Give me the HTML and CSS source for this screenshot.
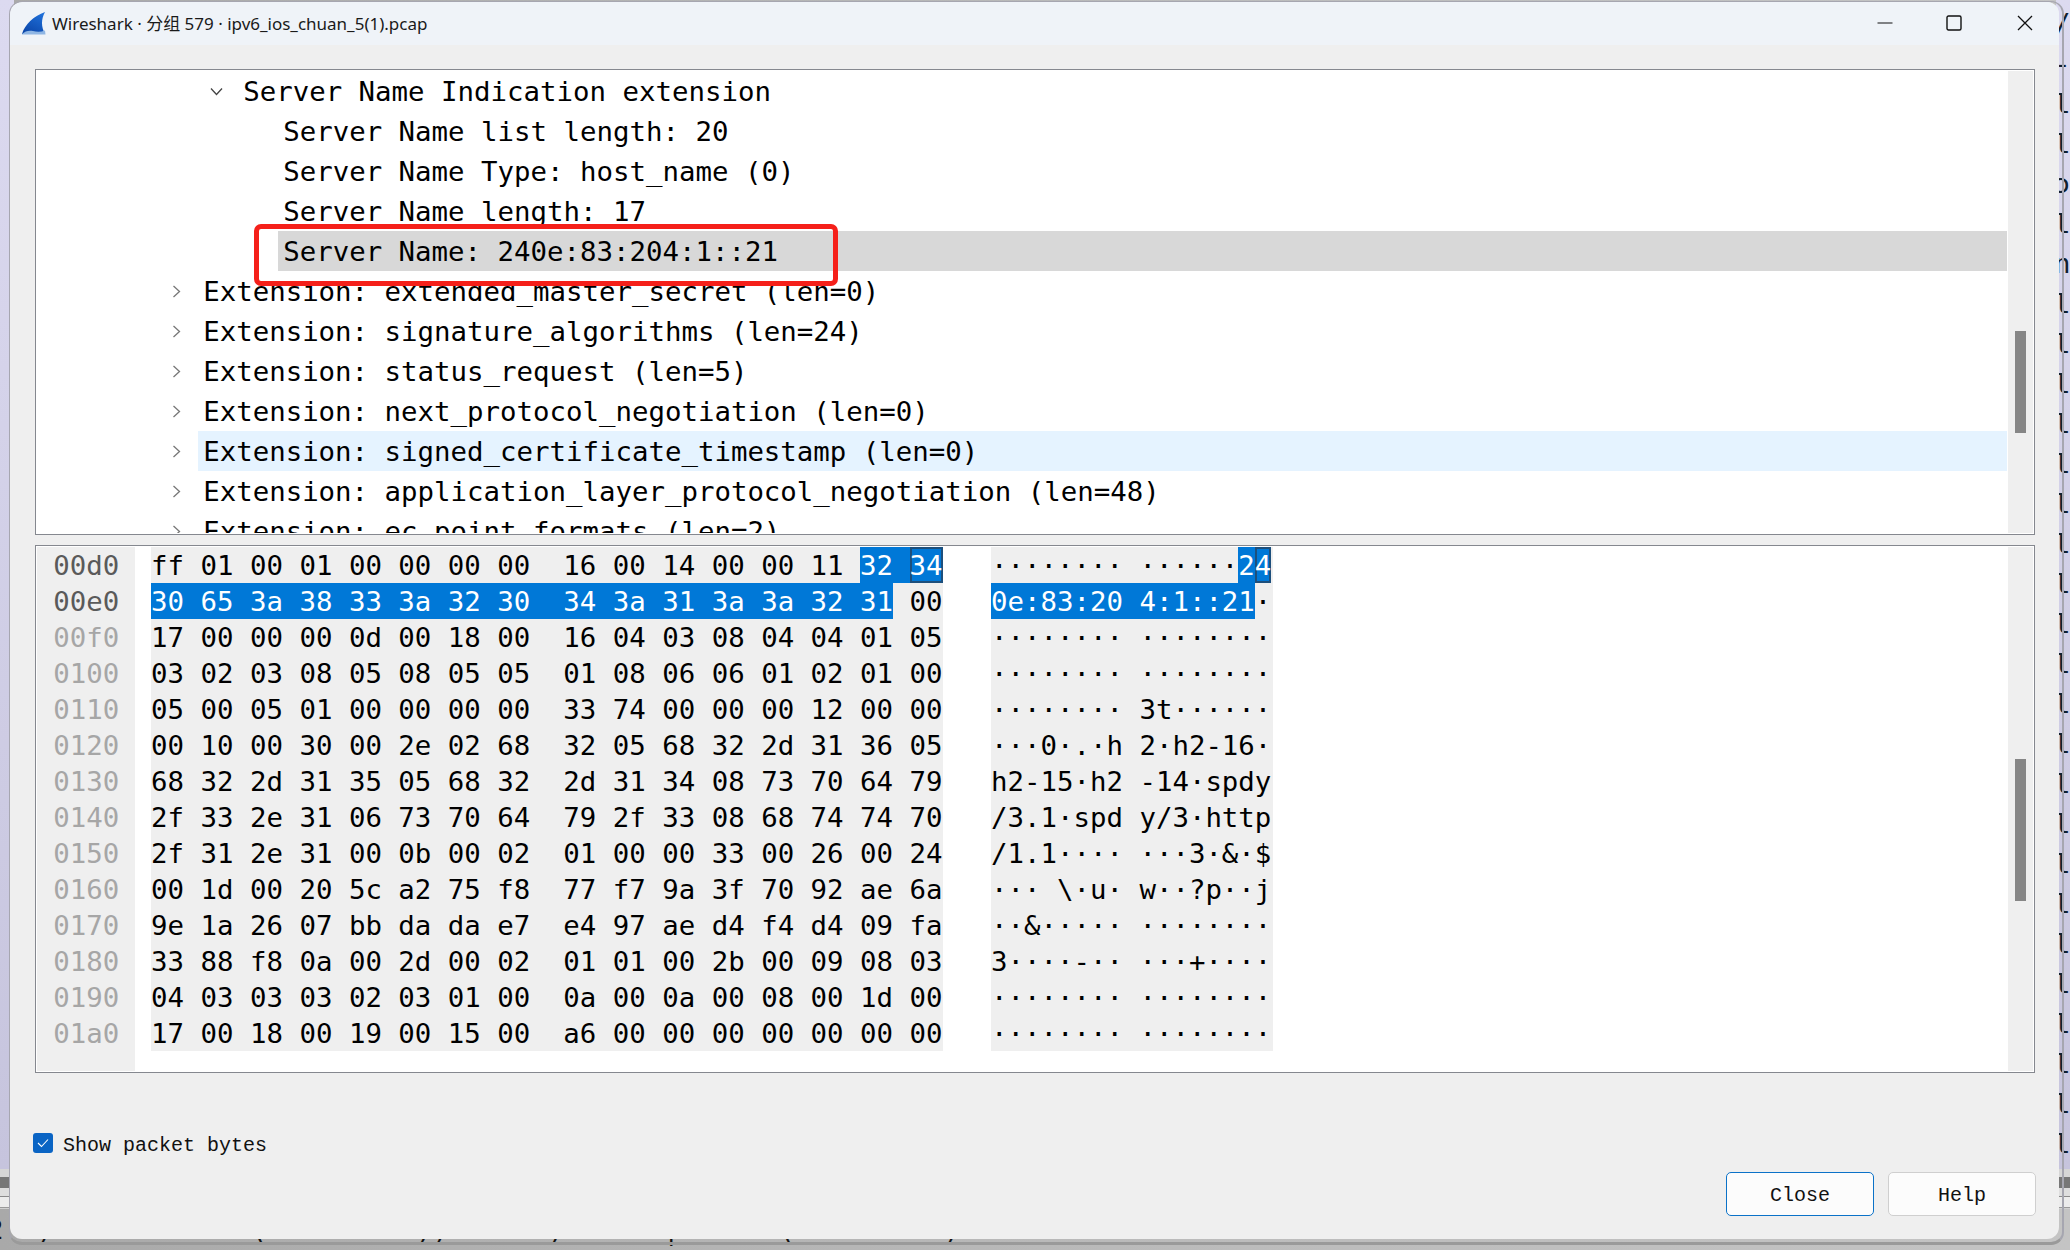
FILE: index.html
```html
<!DOCTYPE html>
<html lang="en">
<head>
<meta charset="utf-8">
<title>Wireshark · 分组 579 · ipv6_ios_chuan_5(1).pcap</title>
<link rel="stylesheet" href="styles.css">
</head>
<body>
<div class="desktop">
  <div class="strip strip-left"></div>
  <div class="strip strip-right"></div>
  <pre class="desk-lines">/
-
l
l
ɔ
l
n
l
l
l
l
l
l
l
l
l
l
l
l
l
l
l
l
l
l
l
l
l
l</pre>
  <div class="taskband taskband-left"></div>
  <div class="taskband taskband-right"></div>
  <pre class="desk-bottom">2  )            (         ))      )      |      (         )</pre>

  <main class="window">
    <header class="titlebar">
      <svg class="shark" width="24" height="24" viewBox="0 0 24 24" aria-hidden="true">
        <defs>
          <linearGradient id="fin" x1="0.7" y1="0" x2="0.2" y2="1">
            <stop offset="0" stop-color="#1f6fd8"/>
            <stop offset="1" stop-color="#0b45a8"/>
          </linearGradient>
        </defs>
        <path d="M0 23 C3 13 12 5 23 1 C19 8 19 16 23 23 Z" fill="url(#fin)"/>
        <path d="M0 23 C3 20 7 19 11 20 C15 21 19 21 23 19.5 L23.500 23.500 L0 23.500 Z" fill="#8fb6e4"/>
      </svg>
      <span class="title-text">Wireshark · 分组 579 · ipv6_ios_chuan_5(1).pcap</span>
      <div class="controls">
        <svg class="ctl ctl-min" width="16" height="16" viewBox="0 0 16 16" aria-hidden="true"><path d="M0.500 8 H15.500" stroke="#111" stroke-width="1.200"/></svg>
        <svg class="ctl ctl-max" width="16" height="16" viewBox="0 0 16 16" aria-hidden="true"><rect x="1" y="1" width="14" height="14" rx="1.500" fill="none" stroke="#111" stroke-width="1.400"/></svg>
        <svg class="ctl ctl-close" width="16" height="16" viewBox="0 0 16 16" aria-hidden="true"><path d="M1 1 L15 15 M15 1 L1 15" stroke="#111" stroke-width="1.300"/></svg>
      </div>
    </header>

    <div class="content">
      <section class="pane pane-tree">
        <div class="tree">
          <div class="row d2"><span class="twisty"><svg width="13" height="9" viewBox="0 0 13 9"><path d="M1 1.500 L6.500 7.500 L12 1.500" fill="none" stroke="#444" stroke-width="1.300"/></svg></span><span class="label">Server Name Indication extension</span></div>
          <div class="row d3"><span class="twisty"></span><span class="label">Server Name list length: 20</span></div>
          <div class="row d3"><span class="twisty"></span><span class="label">Server Name Type: host_name (0)</span></div>
          <div class="row d3"><span class="twisty"></span><span class="label">Server Name length: 17</span></div>
          <div class="row d3"><span class="twisty"></span><span class="label selected">Server Name: 240e:83:204:1::21</span></div>
          <div class="row d1"><span class="twisty"><svg width="9" height="13" viewBox="0 0 9 13"><path d="M1.500 1 L7.500 6.500 L1.500 12" fill="none" stroke="#777" stroke-width="1.300"/></svg></span><span class="label">Extension: extended_master_secret (len=0)</span></div>
          <div class="row d1"><span class="twisty"><svg width="9" height="13" viewBox="0 0 9 13"><path d="M1.500 1 L7.500 6.500 L1.500 12" fill="none" stroke="#777" stroke-width="1.300"/></svg></span><span class="label">Extension: signature_algorithms (len=24)</span></div>
          <div class="row d1"><span class="twisty"><svg width="9" height="13" viewBox="0 0 9 13"><path d="M1.500 1 L7.500 6.500 L1.500 12" fill="none" stroke="#777" stroke-width="1.300"/></svg></span><span class="label">Extension: status_request (len=5)</span></div>
          <div class="row d1"><span class="twisty"><svg width="9" height="13" viewBox="0 0 9 13"><path d="M1.500 1 L7.500 6.500 L1.500 12" fill="none" stroke="#777" stroke-width="1.300"/></svg></span><span class="label">Extension: next_protocol_negotiation (len=0)</span></div>
          <div class="row d1"><span class="twisty"><svg width="9" height="13" viewBox="0 0 9 13"><path d="M1.500 1 L7.500 6.500 L1.500 12" fill="none" stroke="#777" stroke-width="1.300"/></svg></span><span class="label hovered">Extension: signed_certificate_timestamp (len=0)</span></div>
          <div class="row d1"><span class="twisty"><svg width="9" height="13" viewBox="0 0 9 13"><path d="M1.500 1 L7.500 6.500 L1.500 12" fill="none" stroke="#777" stroke-width="1.300"/></svg></span><span class="label">Extension: application_layer_protocol_negotiation (len=48)</span></div>
          <div class="row d1"><span class="twisty"><svg width="9" height="13" viewBox="0 0 9 13"><path d="M1.500 1 L7.500 6.500 L1.500 12" fill="none" stroke="#777" stroke-width="1.300"/></svg></span><span class="label">Extension: ec_point_formats (len=2)</span></div>
        </div>
        <div class="scrollbar scrollbar-tree"><div class="thumb"></div></div>
        <div class="annotation"></div>
      </section>

      <section class="pane pane-hex">
        <div class="hexview">
          <div class="col-offset"><div class="off off-active">00d0</div><div class="off off-active">00e0</div><div class="off">00f0</div><div class="off">0100</div><div class="off">0110</div><div class="off">0120</div><div class="off">0130</div><div class="off">0140</div><div class="off">0150</div><div class="off">0160</div><div class="off">0170</div><div class="off">0180</div><div class="off">0190</div><div class="off">01a0</div></div>
          <div class="col-bytes"><div class="line">ff 01 00 01 00 00 00 00  16 00 14 00 00 11 <span class="hl">32 </span><span class="hl focus">34</span></div><div class="line"><span class="hl">30 65 3a 38 33 3a 32 30  34 3a 31 3a 3a 32 31</span> 00</div><div class="line">17 00 00 00 0d 00 18 00  16 04 03 08 04 04 01 05</div><div class="line">03 02 03 08 05 08 05 05  01 08 06 06 01 02 01 00</div><div class="line">05 00 05 01 00 00 00 00  33 74 00 00 00 12 00 00</div><div class="line">00 10 00 30 00 2e 02 68  32 05 68 32 2d 31 36 05</div><div class="line">68 32 2d 31 35 05 68 32  2d 31 34 08 73 70 64 79</div><div class="line">2f 33 2e 31 06 73 70 64  79 2f 33 08 68 74 74 70</div><div class="line">2f 31 2e 31 00 0b 00 02  01 00 00 33 00 26 00 24</div><div class="line">00 1d 00 20 5c a2 75 f8  77 f7 9a 3f 70 92 ae 6a</div><div class="line">9e 1a 26 07 bb da da e7  e4 97 ae d4 f4 d4 09 fa</div><div class="line">33 88 f8 0a 00 2d 00 02  01 01 00 2b 00 09 08 03</div><div class="line">04 03 03 03 02 03 01 00  0a 00 0a 00 08 00 1d 00</div><div class="line">17 00 18 00 19 00 15 00  a6 00 00 00 00 00 00 00</div></div>
          <div class="col-ascii"><div class="line">········ ······<span class="hl">2</span><span class="hl focus">4</span></div><div class="line"><span class="hl">0e:83:20 4:1::21</span>·</div><div class="line">········ ········</div><div class="line">········ ········</div><div class="line">········ 3t······</div><div class="line">···0·.·h 2·h2-16·</div><div class="line">h2-15·h2 -14·spdy</div><div class="line">/3.1·spd y/3·http</div><div class="line">/1.1···· ···3·&amp;·$</div><div class="line">··· \·u· w··?p··j</div><div class="line">··&amp;····· ········</div><div class="line">3····-·· ···+····</div><div class="line">········ ········</div><div class="line">········ ········</div></div>
        </div>
        <div class="scrollbar scrollbar-hex"><div class="thumb"></div></div>
      </section>

      <label class="show-bytes">
        <span class="checkbox"><svg width="12" height="10" viewBox="0 0 12 10"><path d="M1 5 L4.500 8.500 L11 1.500" fill="none" stroke="#fff" stroke-width="1.100"/></svg></span>
        <span class="show-text">Show packet bytes</span>
      </label>

      <div class="actions">
        <button class="btn btn-default" type="button">Close</button>
        <button class="btn" type="button">Help</button>
      </div>
    </div>
  </main>
</div>
</body>
</html>
```

FILE: styles.css
```css
* { box-sizing: border-box; }

html, body {
  margin: 0;
  padding: 0;
  width: 100%;
  height: 100%;
  overflow: hidden;
}

.desktop {
  position: relative;
  width: 2070px;
  height: 1250px;
  overflow: hidden;
  background: linear-gradient(90deg, #a9a9a9, #bcbcbc 60%, #c4c4c4);
}

.strip {
  position: absolute;
  top: 0;
  height: 1169px;
  width: 14px;
  background: linear-gradient(180deg, #dcdaf0, #c6c4dd);
}
.strip-left { left: 0; }
.strip-right { right: 0; }

.desk-lines {
  position: absolute;
  left: 2054px;
  top: 4px;
  margin: 0;
  font: 27.4px/40px "DejaVu Sans Mono", monospace;
  color: #10202e;
}

.desk-bottom {
  position: absolute;
  left: -13px;
  top: 1212px;
  margin: 0;
  font: 27.4px/36px "DejaVu Sans Mono", monospace;
  color: #111;
}

.taskband {
  position: absolute;
  top: 1169px;
  width: 14px;
  height: 40px;
  background: linear-gradient(180deg, #d6d6d6 0, #d6d6d6 8px, #777 8px, #777 19px, #dedede 19px, #dedede 27px, #8a8a8a 27px, #8a8a8a 28px, #ececec 28px, #ececec 38px, #999 38px, #999 39px, #d0d0d0 39px);
}
.taskband-left { left: 0; }
.taskband-right { right: 0; }

.window {
  position: absolute;
  left: 10px;
  top: 2px;
  width: 2049px;
  height: 1237px;
  display: flex;
  flex-direction: column;
  background: #efefef;
  border-radius: 12px;
  overflow: hidden;
}
.desktop::after {
  content: "";
  position: absolute;
  left: 9px;
  top: 1px;
  width: 2052px;
  height: 1240px;
  border-radius: 13px;
  border: 1px solid #a6a6b0;
  border-right-width: 2px;
  border-bottom: 3px solid #9a9a9a;
  pointer-events: none;
}

.titlebar {
  flex: 0 0 43px;
  display: flex;
  align-items: center;
  padding: 0 0 2px 12px;
  background: #eff3f8;
}
.shark { flex: none; }
.title-text {
  margin-left: 6px;
  font: 17px "Noto Sans", "Noto Sans CJK SC", sans-serif;
  color: #1a1a1a;
  white-space: nowrap;
}
.controls {
  margin-left: auto;
  display: flex;
  align-items: center;
  gap: 54px;
  padding-right: 26px;
}
.ctl { flex: none; display: block; }
.ctl-max { margin: 0 1.3px 0 -1.3px; }

.content {
  flex: 1;
  display: flex;
  flex-direction: column;
  padding: 24px 24px 0 25px;
  min-height: 0;
}

.pane {
  position: relative;
  display: flex;
  background: #fff;
  border: 1px solid #85888f;
  padding: 1px;
}
.pane-tree { height: 466px; }
.pane-hex { height: 528px; margin-top: 10px; }

.tree {
  flex: 1;
  min-width: 0;
  overflow: hidden;
  font: 27.4px/42px "DejaVu Sans Mono", monospace;
  color: #000;
}
.row {
  display: flex;
  height: 40px;
}
.row.d1 { padding-left: 121px; }
.row.d2 { padding-left: 161px; }
.row.d3 { padding-left: 201px; }
.twisty {
  flex: 0 0 40px;
  display: flex;
  align-items: center;
  justify-content: center;
  padding-right: 2.6px;
}
.label {
  flex: 1;
  height: 40px;
  padding-left: 5.2px;
  white-space: pre;
}
.selected { background: #d8d8d8; }
.hovered { background: #e5f3ff; }

.scrollbar {
  position: relative;
  flex: 0 0 25px;
  margin-left: 1px;
  background: #efefef;
}
.thumb {
  position: absolute;
  left: 7px;
  width: 11px;
  background: #868686;
}
.scrollbar-tree .thumb { top: 260px; height: 102px; }
.scrollbar-hex .thumb { top: 212px; height: 142px; }

.annotation {
  position: absolute;
  left: 218px;
  top: 154px;
  width: 584px;
  height: 62px;
  border: 5.500px solid #f5201a;
  border-radius: 7px;
}

.hexview {
  flex: 1;
  min-width: 0;
  display: flex;
  align-items: flex-start;
  font: 27.4px/38px "DejaVu Sans Mono", monospace;
  white-space: pre;
  color: #000;
}
.col-offset {
  align-self: stretch;
  flex: 0 0 98px;
  padding-left: 16.3px;
  background: #efefef;
  color: #a6a6a6;
}
.off { height: 36px; }
.off-active { color: #5a5a5a; }
.col-bytes {
  flex: 0 0 792px;
  margin-left: 16px;
  background: #efefef;
}
.col-ascii {
  flex: 0 0 282px;
  margin-left: 48px;
  background: #efefef;
}
.line { height: 36px; }
.hl {
  display: inline-block;
  height: 36px;
  background: #0078d7;
  color: #fff;
}
.focus {
  box-shadow: inset 0 0 0 2px #1d4f7c;
}

.show-bytes {
  display: flex;
  align-items: center;
  gap: 10px;
  margin: 60px 0 0 -2px;
  height: 20px;
}
.checkbox {
  flex: 0 0 20px;
  height: 20px;
  display: flex;
  align-items: center;
  justify-content: center;
  background: #0a64c4;
  border-radius: 3px;
}
.show-text {
  padding-top: 5px;
  font: 20px/20px "Liberation Mono", monospace;
  color: #111;
}

.actions {
  display: flex;
  justify-content: flex-end;
  gap: 14px;
  margin: 19px -1px 0 0;
}
.btn {
  width: 148px;
  height: 44px;
  padding: 2px 0 0;
  font: 20px "Liberation Mono", monospace;
  color: #111;
  background: #fcfcfc;
  border: 1px solid #cfcfcf;
  border-radius: 5px;
}
.btn-default { border: 1.500px solid #0b72c8; }
```
